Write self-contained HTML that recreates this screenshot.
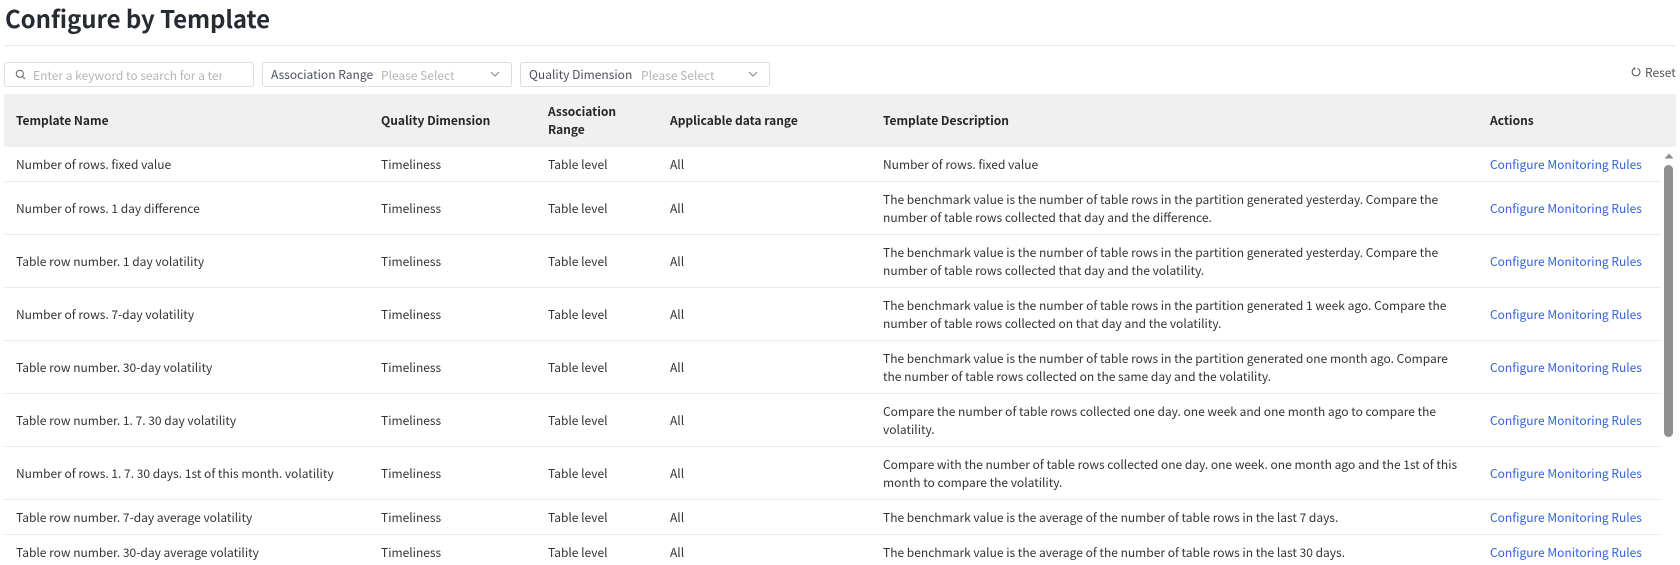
<!DOCTYPE html>
<html lang="en">
<head>
<meta charset="utf-8">
<title>Configure by Template</title>
<style>
*{box-sizing:border-box}
html,body{margin:0;padding:0;background:#fff;width:1680px;height:565px;overflow:hidden}
body{font-family:"Noto Sans CJK SC","Noto Sans CJK JP","Liberation Sans",sans-serif;font-size:12px;color:#333;position:relative}
h1{position:absolute;left:5px;top:0;margin:0;font-size:24px;line-height:36px;font-weight:700;color:#262b33;letter-spacing:-0.07px}
.hr{position:absolute;left:4px;top:45px;width:1672px;height:1px;background:#e8e8e8}
.box{position:absolute;top:62px;height:25px;border:1px solid #dedede;border-radius:3px;background:#fff;white-space:nowrap;overflow:hidden;line-height:23px}
.box .ph{color:#b5b5b5}
.box .lb{position:absolute;left:8px;top:0;color:#4a4f5a}
.box .ph2{position:absolute;top:1px}
.box svg{position:absolute}
.reset{position:absolute;left:1645px;top:63px;line-height:20px;color:#555}
table{position:absolute;left:4px;top:94px;width:1657px;border-collapse:collapse;table-layout:fixed}
th{background:#f0f0f0;font-weight:700;color:#262626;text-align:left;height:53px;line-height:18px;padding:0 12px;vertical-align:middle}
td{padding:2px 12px 0;line-height:18px;border-bottom:1px solid #eaeaea;vertical-align:middle;white-space:nowrap}
td.l{color:#3461dd}
tr.a td{height:35px}
tr.f td{height:34px}
tr.b td{height:53px}
.hd{position:absolute;left:4px;top:94px;width:1672px;height:53px;background:#f0f0f0}
</style>
</head>
<body>
<h1>Configure by Template</h1>
<div class="hr"></div>

<div class="box" style="left:4px;width:250px;">
<svg style="left:10px;top:6px" width="11" height="11" viewBox="0 0 11 11" fill="none" stroke="#666" stroke-width="1"><circle cx="4.8" cy="4.8" r="3.6"/><path d="M7.5 7.5L10 10"/></svg>
<span class="ph" style="position:absolute;left:28px;top:1px;width:189px;overflow:hidden;display:block">Enter a keyword to search for a template</span>
</div>

<div class="box" style="left:262px;width:250px;">
<span class="lb">Association Range</span>
<span class="ph ph2" style="left:118px">Please Select</span>
<svg style="left:227px;top:8px" width="10" height="6" viewBox="0 0 10 6" fill="none" stroke="#888" stroke-width="1"><path d="M1 1l4 4 4-4"/></svg>
</div>

<div class="box" style="left:520px;width:250px;">
<span class="lb">Quality Dimension</span>
<span class="ph ph2" style="left:120px">Please Select</span>
<svg style="left:227px;top:8px" width="10" height="6" viewBox="0 0 10 6" fill="none" stroke="#888" stroke-width="1"><path d="M1 1l4 4 4-4"/></svg>
</div>

<svg style="position:absolute;left:1631px;top:67px" width="10" height="10" viewBox="0 0 10 10" fill="none" stroke="#555" stroke-width="1"><path d="M3 1.6A3.9 3.9 0 1 0 6.5 1.3"/><path d="M3.6 0.2L3 1.8l1.6.5"/></svg>
<div class="reset">Reset</div>

<div class="hd"></div>
<table>
<colgroup><col style="width:365px"><col style="width:167px"><col style="width:122px"><col style="width:213px"><col style="width:607px"><col style="width:183px"></colgroup>
<tr><th>Template Name</th><th>Quality Dimension</th><th>Association<br>Range</th><th>Applicable data range</th><th>Template Description</th><th>Actions</th></tr>
<tr class="f"><td>Number of rows. fixed value</td><td>Timeliness</td><td>Table level</td><td>All</td><td>Number of rows. fixed value</td><td class="l">Configure Monitoring Rules</td></tr>
<tr class="b"><td>Number of rows. 1 day difference</td><td>Timeliness</td><td>Table level</td><td>All</td><td>The benchmark value is the number of table rows in the partition generated yesterday. Compare the<br>number of table rows collected that day and the difference.</td><td class="l">Configure Monitoring Rules</td></tr>
<tr class="b"><td>Table row number. 1 day volatility</td><td>Timeliness</td><td>Table level</td><td>All</td><td>The benchmark value is the number of table rows in the partition generated yesterday. Compare the<br>number of table rows collected that day and the volatility.</td><td class="l">Configure Monitoring Rules</td></tr>
<tr class="b"><td>Number of rows. 7-day volatility</td><td>Timeliness</td><td>Table level</td><td>All</td><td>The benchmark value is the number of table rows in the partition generated 1 week ago. Compare the<br>number of table rows collected on that day and the volatility.</td><td class="l">Configure Monitoring Rules</td></tr>
<tr class="b"><td>Table row number. 30-day volatility</td><td>Timeliness</td><td>Table level</td><td>All</td><td>The benchmark value is the number of table rows in the partition generated one month ago. Compare<br>the number of table rows collected on the same day and the volatility.</td><td class="l">Configure Monitoring Rules</td></tr>
<tr class="b"><td>Table row number. 1. 7. 30 day volatility</td><td>Timeliness</td><td>Table level</td><td>All</td><td>Compare the number of table rows collected one day. one week and one month ago to compare the<br>volatility.</td><td class="l">Configure Monitoring Rules</td></tr>
<tr class="b"><td>Number of rows. 1. 7. 30 days. 1st of this month. volatility</td><td>Timeliness</td><td>Table level</td><td>All</td><td>Compare with the number of table rows collected one day. one week. one month ago and the 1st of this<br>month to compare the volatility.</td><td class="l">Configure Monitoring Rules</td></tr>
<tr class="a"><td>Table row number. 7-day average volatility</td><td>Timeliness</td><td>Table level</td><td>All</td><td>The benchmark value is the average of the number of table rows in the last 7 days.</td><td class="l">Configure Monitoring Rules</td></tr>
<tr class="a"><td>Table row number. 30-day average volatility</td><td>Timeliness</td><td>Table level</td><td>All</td><td>The benchmark value is the average of the number of table rows in the last 30 days.</td><td class="l">Configure Monitoring Rules</td></tr>
</table>

<svg style="position:absolute;left:1664px;top:153px" width="10" height="6" viewBox="0 0 10 6"><path d="M5 0.5L9.5 5.5H0.5Z" fill="#8f8f8f"/></svg>
<div style="position:absolute;left:1664px;top:165px;width:9px;height:272px;background:#8f8f8f;border-radius:5px"></div>
</body>
</html>
